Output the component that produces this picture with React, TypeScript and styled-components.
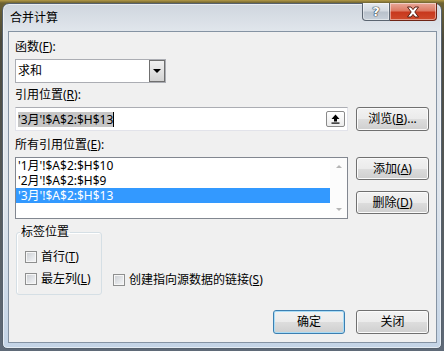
import React from "react";
import styled, { createGlobalStyle } from "styled-components";

const GlobalStyle = createGlobalStyle`
  html, body { margin: 0; padding: 0; }
  body {
    width: 444px;
    height: 351px;
    overflow: hidden;
    background: linear-gradient(to bottom, #b49a45 0px, #6d6232 3px, #4c4a3e 40px, #5f6a78 100%);
    font-family: "Noto Sans", "Noto Sans CJK SC", sans-serif;
  }
`;

const Window = styled.div`
  box-sizing: border-box;
  width: 440px;
  height: 346px;
  margin: 3px 0 0 2px;
  border: 1px solid #56616d;
  border-radius: 7px 7px 5px 5px;
  background: linear-gradient(to bottom, #cfd6de 0%, #e3e8ee 9%, #dfe5ec 55%, #c4d4e6 100%);
  box-shadow: inset 0 0 0 1px rgba(255, 255, 255, 0.55);
  display: flex;
  flex-direction: column;
`;

const TitleBar = styled.div`
  height: 27px;
  display: flex;
  align-items: flex-start;
  justify-content: space-between;
`;

const Title = styled.span`
  margin: 5px 0 0 7px;
  font-size: 12px;
  line-height: 16px;
  color: #000;
  font-family: "Noto Sans CJK SC", sans-serif;
`;

const Captions = styled.div`
  display: flex;
  margin: -1px 4px 0 0;
  height: 18px;
`;

const CaptionBtn = styled.div<{ $close?: boolean }>`
  box-sizing: border-box;
  width: ${(p) => (p.$close ? 47 : 28)}px;
  height: 18px;
  display: flex;
  align-items: center;
  justify-content: center;
  border: 1px solid ${(p) => (p.$close ? "#6e2416" : "#5b6571")};
  border-top: none;
  ${(p) => (p.$close ? "border-left: none;" : "")}
  border-radius: ${(p) => (p.$close ? "0 0 4px 0" : "0 0 0 4px")};
  background: ${(p) =>
    p.$close
      ? "linear-gradient(to bottom, #e9a99a 0%, #dc7a63 45%, #c8381d 55%, #cf4b2c 100%)"
      : "linear-gradient(to bottom, #e6eaef 0%, #d4dae1 45%, #b9c2cc 55%, #c8d0d9 100%)"};
  box-shadow: inset 0 0 0 1px rgba(255, 255, 255, 0.45);
`;

const HelpGlyph = styled.span`
  font-family: "DejaVu Sans", sans-serif;
  font-weight: bold;
  font-size: 13px;
  line-height: 14px;
  color: #fff;
  text-shadow: 0 0 1px #1e2731, 0 0 1px #1e2731, 0 0 1px #1e2731;
`;

const Client = styled.div`
  flex: 1;
  margin: 0 4px 5px 5px;
  border: 1px solid #8593a3;
  background: #f0f0f0;
  padding: 7px 7px 8px 6px;
  display: flex;
  flex-direction: column;
  font-size: 12px;
  color: #000;
`;

const FieldLabel = styled.div<{ $gap?: number }>`
  height: 16px;
  line-height: 16px;
  margin-top: ${(p) => p.$gap ?? 0}px;
`;

const Combo = styled.div`
  box-sizing: border-box;
  width: 151px;
  height: 24px;
  margin-top: 4px;
  border: 1px solid #abadb3;
  background: #fff;
  display: flex;
  align-items: center;
`;

const ComboValue = styled.span`
  flex: 1;
  padding-left: 2px;
  line-height: 16px;
`;

const DropButton = styled.div`
  box-sizing: border-box;
  width: 16px;
  height: 22px;
  border: 1px solid #6f6f6f;
  background: linear-gradient(to bottom, #f0f0f0 0%, #e2e2e2 50%, #d2d2d2 100%);
  display: flex;
  align-items: center;
  justify-content: center;

  &::after {
    content: "";
    border-left: 4px solid transparent;
    border-right: 4px solid transparent;
    border-top: 4px solid #000;
  }
`;

const Row = styled.div<{ $gap?: number }>`
  display: flex;
  gap: 8px;
  margin-top: ${(p) => p.$gap ?? 0}px;
`;

const RefInput = styled.div`
  box-sizing: border-box;
  flex: 1;
  height: 24px;
  border: 1px solid #e2e3ea;
  border-top-color: #abadb3;
  background: #fff;
  display: flex;
  align-items: center;
  padding: 0 2px 0 2px;
`;

const Selected = styled.span`
  background: #c6c6c6;
  line-height: 15px;
`;

const Caret = styled.span`
  width: 1px;
  height: 15px;
  background: #000;
`;

const Spacer = styled.span`
  flex: 1;
`;

const CollapseButton = styled.div`
  box-sizing: border-box;
  width: 19px;
  height: 16px;
  border: 1px solid #8a8a8a;
  border-radius: 2px;
  background: linear-gradient(to bottom, #ffffff, #ececec);
  display: flex;
  align-items: center;
  justify-content: center;
`;

const PushButton = styled.button<{ $w?: number; $h?: number; $default?: boolean }>`
  box-sizing: border-box;
  width: ${(p) => p.$w ?? 73}px;
  height: ${(p) => p.$h ?? 24}px;
  padding: 0;
  border: 1px solid ${(p) => (p.$default ? "#3c7fb1" : "#707070")};
  border-radius: 3px;
  background: linear-gradient(to bottom, #f2f2f2 0%, #ebebeb 50%, #dddddd 51%, #cfcfcf 100%);
  box-shadow: inset 0 0 0 1px ${(p) => (p.$default ? "#a9dcf6" : "#fbfbfb")};
  font-family: "Noto Sans", "Noto Sans CJK SC", sans-serif;
  font-size: 12px;
  line-height: 16px;
  color: #000;
`;

const ListBox = styled.div`
  box-sizing: border-box;
  flex: 1;
  height: 62px;
  border: 1px solid #828790;
  background: #fff;
  display: flex;
`;

const ListItems = styled.div`
  flex: 1;
  display: flex;
  flex-direction: column;
`;

const ListItem = styled.div<{ $selected?: boolean }>`
  height: 15px;
  line-height: 15px;
  padding-left: 2px;
  overflow: hidden;
  white-space: nowrap;
  background: ${(p) => (p.$selected ? "#3399ff" : "transparent")};
  color: ${(p) => (p.$selected ? "#fff" : "#000")};
`;

const ScrollBar = styled.div`
  width: 17px;
  display: flex;
  flex-direction: column;
  justify-content: space-between;
  align-items: center;
  padding: 7px 0 7px;
  background: #fcfcfc;
`;

const Arrow = styled.span<{ $up?: boolean }>`
  border-left: 3.5px solid transparent;
  border-right: 3.5px solid transparent;
  ${(p) => (p.$up ? "border-bottom" : "border-top")}: 3.5px solid #b5b5b5;
`;

const ButtonColumn = styled.div`
  display: flex;
  flex-direction: column;
  gap: 11px;
`;

const BottomArea = styled.div`
  display: flex;
  align-items: flex-end;
  margin-top: 6px;
`;

const GroupBox = styled.fieldset`
  box-sizing: border-box;
  width: 86px;
  margin: 0 0 0 1px;
  min-width: 0;
  padding: 10px 0 7px 8px;
  border: 1px solid #d5dfe5;
  border-radius: 3px;
  box-shadow: inset 1px 1px 0 #fff;
  display: flex;
  flex-direction: column;
  gap: 6px;
`;

const Legend = styled.legend`
  padding: 0 1px;
  margin-left: -5px;
  line-height: 14px;
  font-size: 12px;
`;

const CheckRow = styled.label<{ $indent?: number }>`
  display: flex;
  align-items: center;
  gap: 4px;
  height: 16px;
  line-height: 16px;
  margin-left: ${(p) => p.$indent ?? 0}px;
`;

const CheckBox = styled.span`
  box-sizing: border-box;
  width: 12px;
  height: 12px;
  border: 1px solid #8e8f8f;
  background: linear-gradient(135deg, #c9ccd0 0%, #e9ebee 70%, #f5f5f5 100%);
  box-shadow: inset 0 0 0 1px #f6f6f6;
`;

const LinkCheck = styled.div`
  margin-bottom: 7px;
`;

const Footer = styled.div`
  display: flex;
  justify-content: flex-end;
  gap: 11px;
  margin-top: 15px;
`;

const CloseIcon = () => (
  <svg width="14" height="12" viewBox="0 0 14 12">
    <path
      d="M1.5 1 H5 L7 3.6 L9 1 H12.5 L8.8 6 L12.5 11 H9 L7 8.4 L5 11 H1.5 L5.2 6 Z"
      fill="#fff"
      stroke="#5a1c10"
      strokeWidth="1"
      strokeLinejoin="round"
    />
  </svg>
);

const UpIcon = () => (
  <svg width="9" height="10" viewBox="0 0 9 10">
    <path d="M4.5 0.5 L8.5 5 H6 V7.5 H3 V5 H0.5 Z" fill="#000" />
    <rect x="0.5" y="8.5" width="8" height="1.2" fill="#000" />
  </svg>
);

export default function App() {
  return (
    <>
      <GlobalStyle />
      <Window>
        <TitleBar>
          <Title>合并计算</Title>
          <Captions>
            <CaptionBtn>
              <HelpGlyph>?</HelpGlyph>
            </CaptionBtn>
            <CaptionBtn $close>
              <CloseIcon />
            </CaptionBtn>
          </Captions>
        </TitleBar>
        <Client>
          <FieldLabel>
            函数(<u>F</u>):
          </FieldLabel>
          <Combo>
            <ComboValue>求和</ComboValue>
            <DropButton />
          </Combo>
          <FieldLabel $gap={4}>
            引用位置(<u>R</u>):
          </FieldLabel>
          <Row $gap={4}>
            <RefInput>
              <Selected>'3月'!$A$2:$H$13</Selected>
              <Caret />
              <Spacer />
              <CollapseButton>
                <UpIcon />
              </CollapseButton>
            </RefInput>
            <PushButton>
              浏览(<u>B</u>)...
            </PushButton>
          </Row>
          <FieldLabel $gap={6}>
            所有引用位置(<u>E</u>):
          </FieldLabel>
          <Row $gap={4}>
            <ListBox>
              <ListItems>
                <ListItem>'1月'!$A$2:$H$10</ListItem>
                <ListItem>'2月'!$A$2:$H$9</ListItem>
                <ListItem $selected>'3月'!$A$2:$H$13</ListItem>
              </ListItems>
              <ScrollBar>
                <Arrow $up />
                <Arrow />
              </ScrollBar>
            </ListBox>
            <ButtonColumn>
              <PushButton $h={23}>
                添加(<u>A</u>)
              </PushButton>
              <PushButton $h={23}>
                删除(<u>D</u>)
              </PushButton>
            </ButtonColumn>
          </Row>
          <BottomArea>
            <GroupBox>
              <Legend>标签位置</Legend>
              <CheckRow>
                <CheckBox />
                <span>
                  首行(<u>T</u>)
                </span>
              </CheckRow>
              <CheckRow>
                <CheckBox />
                <span>
                  最左列(<u>L</u>)
                </span>
              </CheckRow>
            </GroupBox>
            <LinkCheck>
              <CheckRow $indent={11}>
                <CheckBox />
                <span>
                  创建指向源数据的链接(<u>S</u>)
                </span>
              </CheckRow>
            </LinkCheck>
          </BottomArea>
          <Footer>
            <PushButton $w={72} $default>
              确定
            </PushButton>
            <PushButton>关闭</PushButton>
          </Footer>
        </Client>
      </Window>
    </>
  );
}
